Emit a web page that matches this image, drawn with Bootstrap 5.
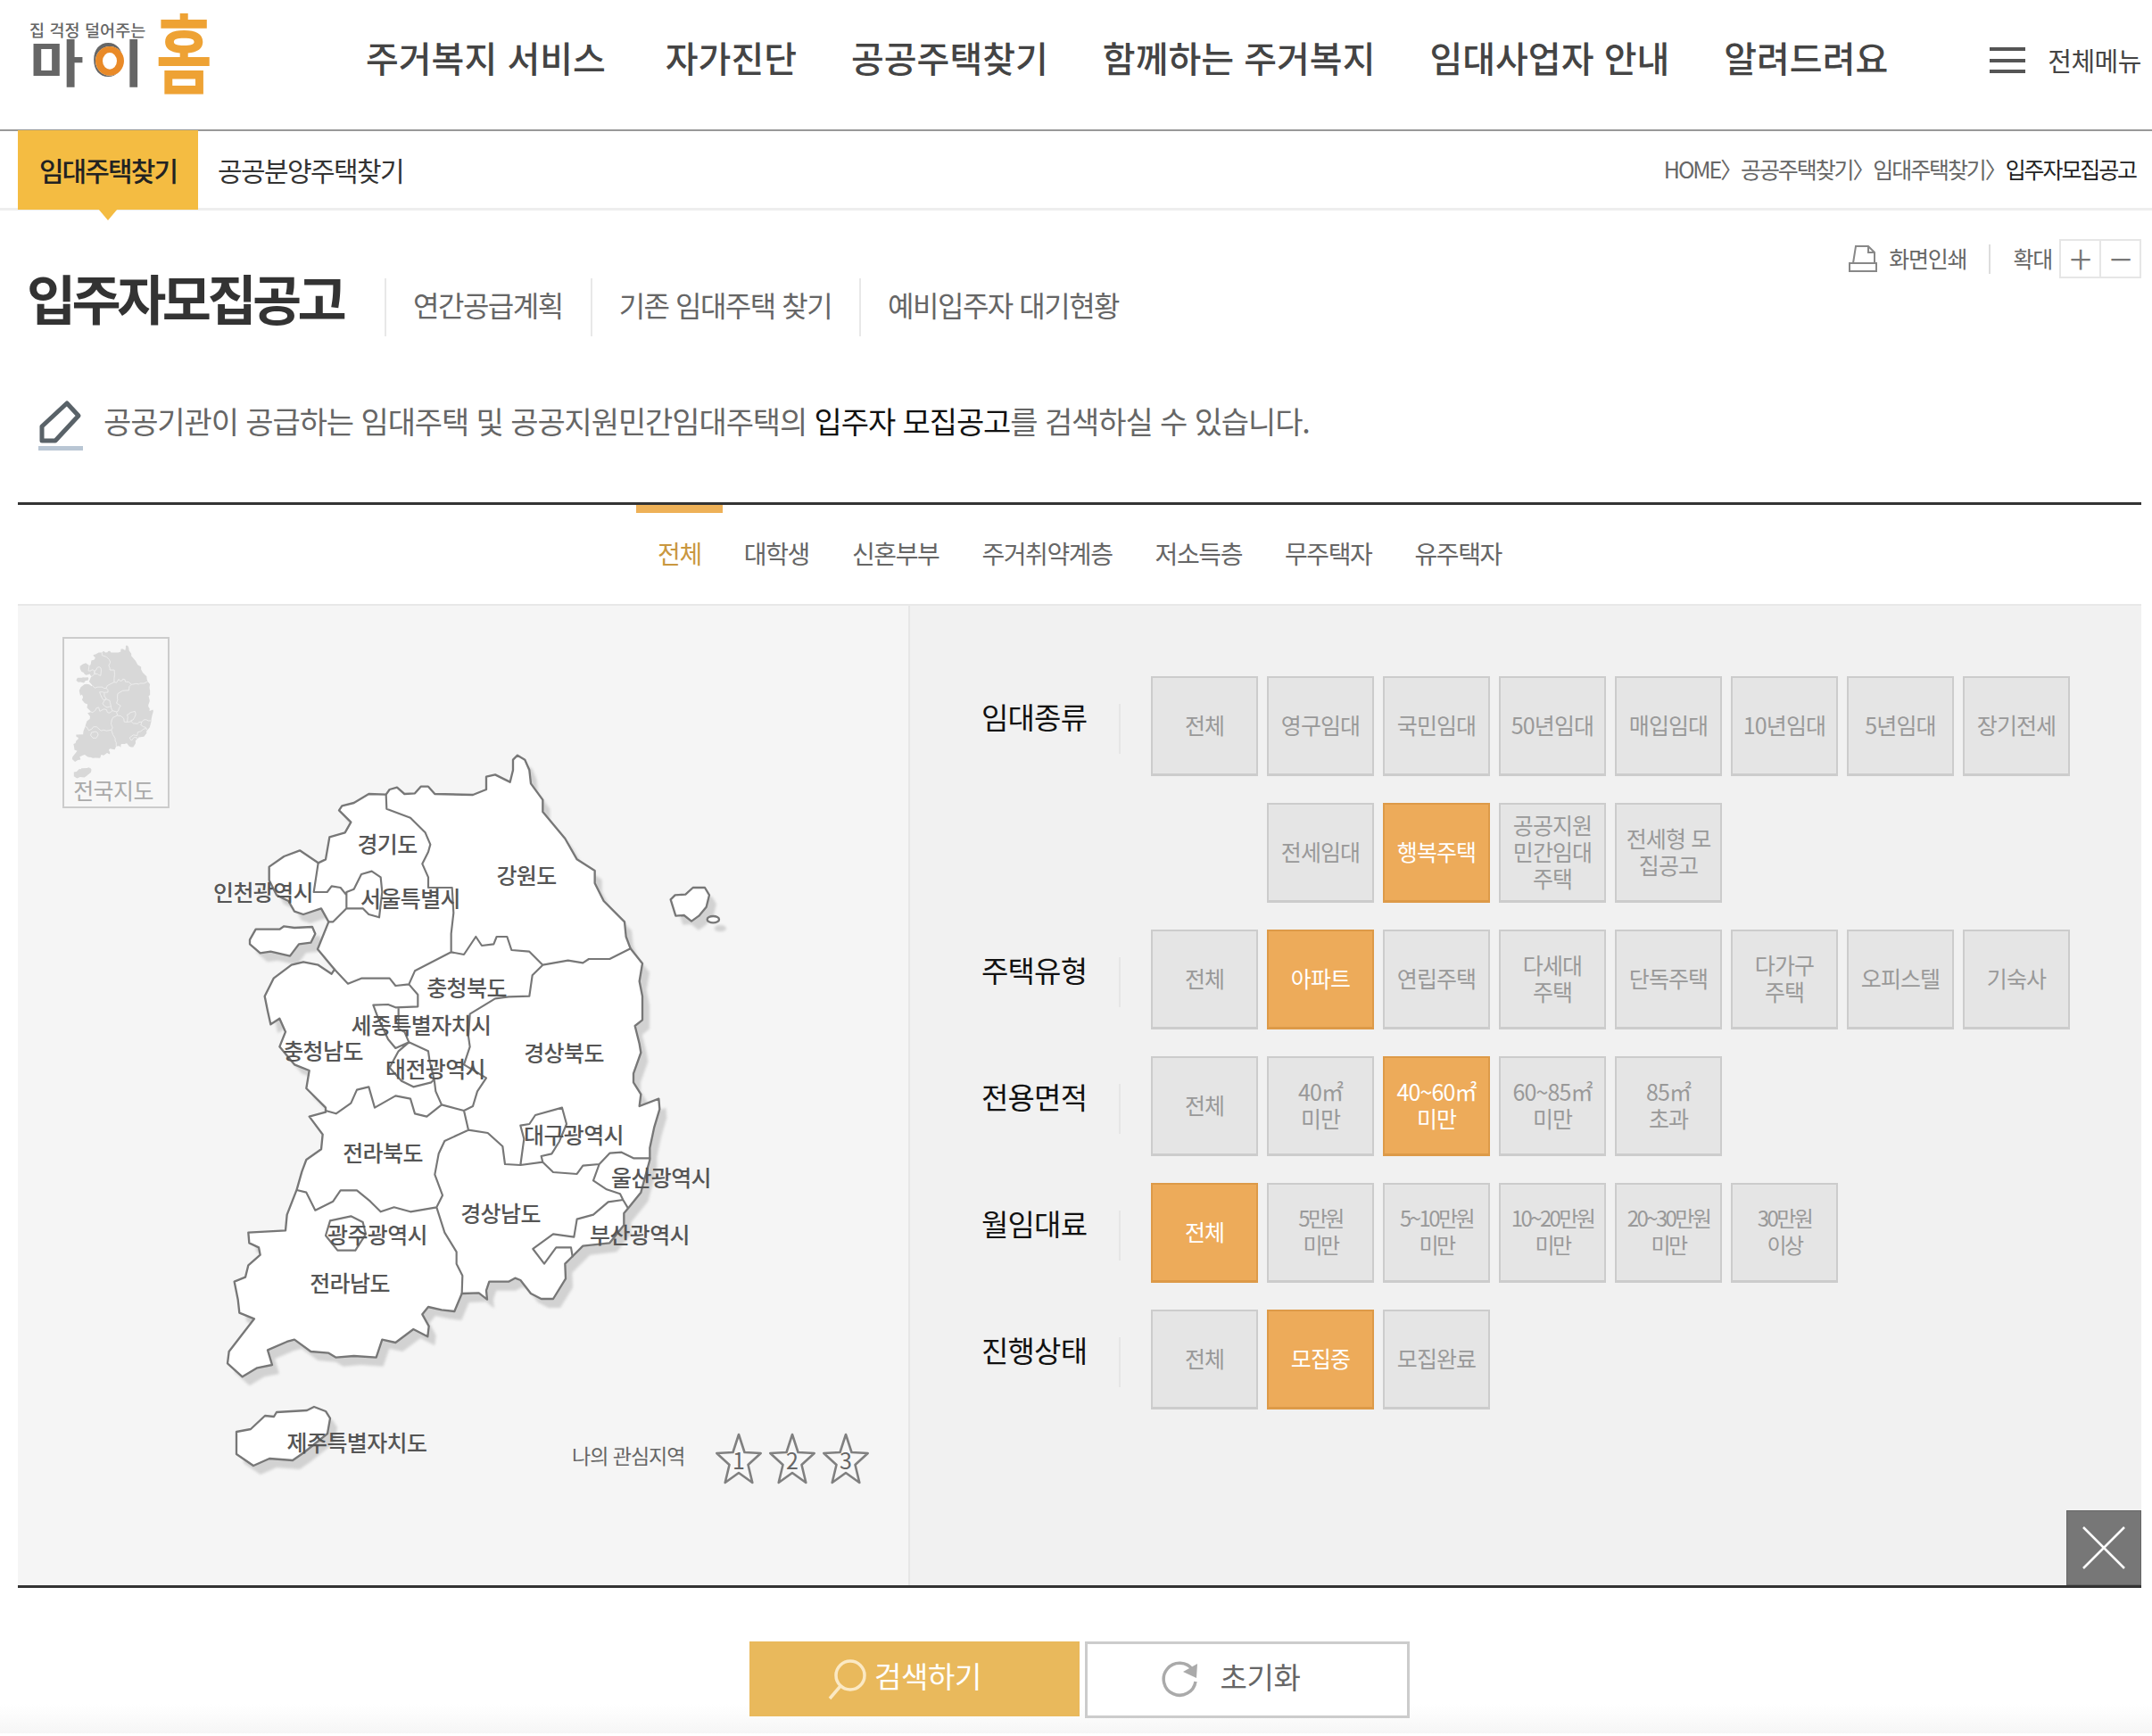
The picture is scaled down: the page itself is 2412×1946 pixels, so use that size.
<!DOCTYPE html>
<html lang="ko">
<head>
<meta charset="utf-8">
<title>입주자모집공고</title>
<link href="https://cdn.jsdelivr.net/npm/bootstrap@5.3.0/dist/css/bootstrap.min.css" rel="stylesheet">
<style>
html,body{background:#fff}
body{font-family:"Noto Sans CJK KR","Noto Sans",sans-serif;color:#333;width:2412px;height:1946px;overflow:hidden}
a{text-decoration:none;color:inherit}
.top-head{height:147px;border-bottom:2px solid #999;padding-left:33px}
.logo-box{width:206px;height:100px;align-self:flex-start;margin-top:14px;position:relative}
.logo-left{width:142px;padding-top:9px}
.logo-sub{font-size:18.5px;letter-spacing:.1px;line-height:20px;color:#666;font-weight:500;white-space:nowrap}
.logo-main{font-size:66px;line-height:50px;height:50px;font-weight:700;color:#666;letter-spacing:7px;position:relative;white-space:nowrap;margin-top:3px;transform:scaleY(.86);transform-origin:top left}
.logo-ring{position:absolute;left:71px;top:4px;width:38px;height:44px}
.logo-home{font-size:68px;line-height:88px;height:88px;font-weight:700;color:#eea234;transform:scaleY(1.42);transform-origin:center;margin-top:-2px}
.gnb{margin-left:171px;gap:61px;margin-bottom:18px}
.gnb a{font-size:40px;line-height:50px;font-weight:500;color:#444;white-space:nowrap}
.gnb a:nth-child(2){margin-left:6px}
.all-menu{margin-left:114px;gap:25px;font-size:29px;color:#444;letter-spacing:-.5px;white-space:nowrap;margin-bottom:10px}
.burger{width:40px;height:29px;border-top:4px solid #555;border-bottom:4px solid #555;position:relative}
.burger::after{content:"";position:absolute;left:0;right:0;top:8.5px;height:4px;background:#555}
.sub-head{height:89px;border-bottom:3px solid #eee;padding-left:20px;padding-right:18px}
.sub-on{width:202px;height:89px;background:#f4bc42;font-size:30px;font-weight:500;letter-spacing:-1.9px;color:#222;position:relative}
.sub-on::after{content:"";position:absolute;left:90px;top:88px;border-left:11px solid transparent;border-right:11px solid transparent;border-top:13px solid #f4bc42}
.sub-off{font-size:30px;letter-spacing:-1.6px;margin-left:22px;color:#333}
.crumb{font-size:25px;letter-spacing:-2.1px;color:#666}
.crumb b{font-weight:400;color:#222}
.wrap-main{margin:0 12px 0 20px}
.title-row{padding-top:32px;height:141px}
.title-main{font-size:60px;line-height:65px;font-weight:700;letter-spacing:-4.6px;color:#333;margin:0 0 0 10px;width:401px;padding-top:32px;height:109px;box-sizing:border-box;white-space:nowrap}
.side-links{padding-top:44px}
.side-links a{display:flex;align-items:center;height:65px;padding:0 31px 7px 30px;border-left:2px solid #e8e8e8;font-size:32px;letter-spacing:-1.5px;color:#666;white-space:nowrap}
.tools{font-size:25px;letter-spacing:-1.2px;color:#666;height:44px}
.tool-ico{margin-right:12px}
.tool-sep{width:2px;height:33px;background:#ddd;margin:0 25px}
.zoom-box{width:92px;height:44px;border:2px solid #e6e6e6;margin-left:8px}
.zoom-box span{flex:1;text-align:center;font-size:46px;line-height:36px;color:#777;font-weight:300}
.zoom-box span+span{border-left:2px solid #e6e6e6}
.desc-row{padding:70px 0 56px 23px;height:186px;gap:23px}
.desc-text{font-size:34px;line-height:50px;letter-spacing:-1.1px;color:#666;white-space:nowrap}
.desc-text b{font-weight:400;color:#111}
.tab-row{height:116px;border-top:3px solid #333;border-bottom:2px solid #e8e8e8}
.tab-item{padding:0 24px;font-size:28px;letter-spacing:-1.4px;color:#666;line-height:109px;position:relative;white-space:nowrap}
.tab-on{color:#c9973f}
.tab-on::before{content:"";position:absolute;left:0;right:0;top:0;height:9px;background:#eeb158}
.panel-row{height:1101px;border-bottom:3px solid #333}
.panel-map{flex:0 0 998px;background:#f5f5f5}
.panel-map svg{display:block}
.panel-filter{flex:1;background:#f1f1f1;border-left:2px solid #e6e6e6;padding:79px 0 0 80px;position:relative;gap:30px}
.frow{display:flex}
.flabel{flex:0 0 156px;height:56px;margin:31px 34px 0 0;border-right:2px solid #e6e6e6;font-size:33px;line-height:28px;letter-spacing:-.8px;color:#111;white-space:nowrap}
.fgrid{display:grid;grid-template-columns:repeat(8,120px);grid-auto-rows:112px;gap:30px 10px}
.fbtn{display:flex;align-items:center;justify-content:center;padding:0 0 3px;background:#e5e5e5;border:2px solid #ccc;border-bottom-width:3px;border-radius:0;color:#999;font-size:25px;line-height:30px;letter-spacing:-.9px;white-space:nowrap}
.fbtn-on,.fbtn-on:hover{background:#edab5a;border-color:#dd9a48;color:#fff}
.fbtn-sm{letter-spacing:-2.6px;font-size:24px}
.close-x{position:absolute;right:0;bottom:0;width:84px;height:84px;background:#777;border:1px solid #666;padding:0;border-radius:0}
.foot-zone{height:163px;padding:60px 0 0 840px;gap:6px;background:linear-gradient(#fff 80%,#f6f6f6)}
.act-go,.act-go:hover{width:370px;height:84px;background:#e9b95c;border:0;border-radius:0;color:#fff;font-size:33px;letter-spacing:-.4px;gap:8px;padding:0 24px 0 0}
.act-re,.act-re:hover{width:364px;height:86px;background:#fff;border:3px solid #ccc;border-radius:0;color:#666;font-size:33px;letter-spacing:-.4px;gap:24px;padding:0 37px 0 0}
.act-label{padding-bottom:7px}
.m-land{fill:#fff;stroke:#777;stroke-width:7;stroke-linejoin:round}
.m-shadow{fill:#d2d2d2;stroke:none;filter:url(#sblur)}
.m-line{fill:none;stroke:#777;stroke-width:6.5;stroke-linejoin:round;stroke-linecap:round}
.m-mini{fill:#d8d8d8;stroke:none}
.m-miniline{fill:none;stroke:#efefef;stroke-width:14}
.m-txt{font-size:25px;letter-spacing:-.6px;font-weight:500;fill:#555;text-anchor:middle;dominant-baseline:central}
.m-plain{font-size:23px;letter-spacing:-1px;fill:#666;dominant-baseline:central}
.m-num{font-size:25px;fill:#666;text-anchor:middle;dominant-baseline:central}
.m-mtitle{font-size:25px;letter-spacing:-.6px;fill:#aaa;text-anchor:middle;dominant-baseline:central}
</style>
</head>
<body>
<header class="top-head d-flex align-items-center">
  <a href="#" class="logo-box d-flex">
    <div class="logo-left">
      <div class="logo-sub">집 걱정 덜어주는</div>
      <div class="logo-main">마이<svg class="logo-ring" viewBox="0 0 38 44"><ellipse cx="19" cy="22" rx="16" ry="19" fill="#fff"/><ellipse cx="19" cy="22" rx="12" ry="15" fill="#fff" stroke="#e98a28" stroke-width="8"/></svg></div>
    </div>
    <div class="logo-home">홈</div>
  </a>
  <nav class="gnb d-flex">
    <a href="#">주거복지 서비스</a>
    <a href="#">자가진단</a>
    <a href="#">공공주택찾기</a>
    <a href="#">함께하는 주거복지</a>
    <a href="#">임대사업자 안내</a>
    <a href="#">알려드려요</a>
  </nav>
  <a href="#" class="all-menu d-flex align-items-center"><span class="burger"></span><span>전체메뉴</span></a>
</header>
<div class="sub-head d-flex align-items-center">
  <a href="#" class="sub-on d-flex align-items-center justify-content-center">임대주택찾기</a>
  <a href="#" class="sub-off">공공분양주택찾기</a>
  <div class="crumb ms-auto">HOME〉공공주택찾기〉임대주택찾기〉<b>입주자모집공고</b></div>
</div>
<main class="wrap-main">
  <div class="title-row d-flex">
    <h1 class="title-main">입주자모집공고</h1>
    <div class="side-links d-flex">
      <a href="#">연간공급계획</a>
      <a href="#">기존 임대주택 찾기</a>
      <a href="#">예비입주자 대기현황</a>
    </div>
    <div class="tools d-flex align-items-center ms-auto">
      <svg width="34" height="32" viewBox="0 0 34 32" class="tool-ico"><path d="M6 21 L9 2 H23 L30 9 V21 M23 2 V9 H30" fill="none" stroke="#888" stroke-width="2"/><rect x="2" y="21" width="30" height="9" fill="#fff" stroke="#888" stroke-width="2"/></svg>
      <span>화면인쇄</span><span class="tool-sep"></span><span>확대</span>
      <div class="zoom-box d-flex"><span>+</span><span>−</span></div>
    </div>
  </div>
  <div class="desc-row d-flex align-items-start">
    <svg width="50" height="60" viewBox="0 0 50 60"><path d="M4 47 L4 31 L32 5 L45 19 L19 47 Z" fill="none" stroke="#596268" stroke-width="5" stroke-linejoin="round"/><rect x="0" y="53" width="50" height="5" fill="#b9c6d4"/></svg>
    <p class="desc-text m-0">공공기관이 공급하는 임대주택 및 공공지원민간임대주택의 <b>입주자 모집공고</b>를 검색하실 수 있습니다.</p>
  </div>
  <div class="tab-row d-flex justify-content-center">
    <a href="#" class="tab-item tab-on">전체</a>
    <a href="#" class="tab-item">대학생</a>
    <a href="#" class="tab-item">신혼부부</a>
    <a href="#" class="tab-item">주거취약계층</a>
    <a href="#" class="tab-item">저소득층</a>
    <a href="#" class="tab-item">무주택자</a>
    <a href="#" class="tab-item">유주택자</a>
  </div>
  <div class="panel-row d-flex">
    <div class="panel-map">
      <svg width="998" height="1098" viewBox="20 679 998 1098" role="img" aria-label="지역 지도">
        <defs>
          <filter id="sblur" x="-10%" y="-10%" width="120%" height="120%"><feGaussianBlur stdDeviation="4"/></filter>
          <g id="landmain">
            <path d="M548 152 L560 135 585 128 610 150 645 148 665 125 690 125 712 150 840 153 885 135 885 92 915 85 945 100 965 110 975 70 975 35 990 20 1015 35 1030 70 1035 115 1075 170 1075 210 1150 300 1190 370 1250 408 1250 450 1280 510 1350 580 1355 630 1370 670 1410 720 1400 780 1410 830 1410 910 1385 930 1400 990 1405 1020 1380 1090 1380 1120 1405 1160 1400 1200 1465 1175 1468 1210 1450 1270 1435 1340 1435 1380 1405 1490 1365 1540 1348 1560 1348 1600 1300 1660 1210 1670 1170 1710 1150 1730 1152 1780 1110 1848 1070 1848 1035 1830 1000 1785 982 1778 960 1790 895 1790 885 1820 888 1850 860 1828 803 1830 778 1890 735 1885 690 1875 670 1900 692 1940 688 1975 640 1950 580 1995 535 1985 515 2045 440 2040 380 2045 355 2030 295 2025 240 1985 215 1992 150 2020 165 2070 115 2080 65 2110 15 2065 20 2025 105 1915 55 1895 50 1850 38 1790 75 1775 85 1735 125 1700 120 1675 88 1660 85 1625 210 1618 215 1565 248 1480 265 1420 280 1380 330 1345 335 1295 290 1235 345 1220 345 1205 280 1140 290 1080 240 1060 190 1000 210 950 190 905 160 925 150 880 140 830 170 770 230 725 270 715 320 725 365 755 375 740 318 672 355 580 330 535 270 555 240 545 220 510 180 490 155 440 155 395 205 360 258 340 320 382 345 370 358 295 410 280 430 245 390 205 400 190 440 180 490 150 Z"/>
            <path d="M90 640 L110 605 190 605 205 595 240 600 300 597 310 620 295 650 255 655 225 695 160 680 125 685 90 655 Z"/>
            <path d="M45 2295 L93 2286 141 2241 171 2244 180 2229 282 2223 306 2211 345 2226 360 2250 351 2301 273 2364 234 2391 156 2385 102 2409 45 2370 Z"/>
          </g>
          <g id="landeast">
            <path d="M1505 505 L1520 490 1555 488 1580 465 1620 465 1635 490 1625 530 1600 560 1575 578 1550 558 1522 560 Z"/>
            <ellipse cx="1648" cy="572" rx="20" ry="11"/>
          </g>
          <path id="borderlines" d="M548 152 L550 200 630 230 680 280 697 320 690 345 670 385 690 430 690 465 770 465 775 550 767 620 767 682 810 690 850 630 870 660 910 655 920 630 955 630 970 675 1030 680 1075 725 1160 710 1210 718 1230 705 1300 705 1370 670 M1075 725 L1040 760 1030 830 960 832 915 838 830 890 825 965 830 1000 810 1060 885 1105 855 1150 840 1200 810 1215 735 1195 715 1150 710 1110 M345 1215 L380 1225 430 1190 450 1145 490 1135 510 1205 580 1165 630 1175 645 1225 685 1235 735 1195 M810 1215 L825 1280 745 1317 725 1360 712 1430 738 1500 718 1540 M248 1482 L280 1490 310 1550 370 1520 395 1483 450 1483 495 1520 530 1555 575 1540 630 1555 718 1540 745 1625 785 1690 785 1730 805 1770 803 1830 M825 1280 L890 1290 940 1335 948 1395 1000 1398 1075 1388 1110 1422 1190 1428 1210 1400 1265 1395 1300 1358 1340 1355 1380 1375 1435 1375 M1265 1395 L1245 1450 1290 1480 1335 1495 1345 1515 1360 1540 M1345 1515 L1295 1522 1245 1565 1190 1580 1180 1640 1110 1630 1042 1680 1080 1730 1120 1675 1170 1675 1175 1705 M1000 1398 L1012 1310 1000 1265 1030 1260 1050 1230 1140 1205 1155 1260 1130 1320 1105 1360 1070 1368 1075 1388 M375 740 L420 788 465 770 560 770 580 795 625 790 645 745 767 682 M625 790 L655 825 655 865 580 868 555 858 505 860 520 900 555 975 580 1005 625 985 610 950 590 940 590 868 M625 985 L690 1015 695 1050 710 1110 700 1120 640 1135 600 1115 560 1070 590 1015 625 985 M320 382 L305 480 350 480 365 460 395 465 415 490 415 535 370 580 355 580 M415 535 L415 480 440 470 465 420 500 410 530 430 535 480 525 565 490 555 470 535 415 535 M360 1585 L430 1570 470 1590 480 1630 445 1685 385 1685 345 1635 360 1585"/>
        </defs>
        <!-- 전국지도 -->
        <rect x="71" y="715" width="118" height="190" fill="#f7f7f7" stroke="#ccc" stroke-width="2"/>
        <g transform="translate(80 722) scale(.0625)"><use href="#landmain" class="m-mini"/><use href="#borderlines" class="m-miniline"/></g>
        <text x="127" y="885" class="m-mtitle">전국지도</text>
        <!-- 지도 -->
        <g transform="translate(250 840) scale(.33333)">
          <g transform="translate(24 30)"><use href="#landmain" class="m-shadow"/><use href="#landeast" class="m-shadow"/></g>
          <use href="#landmain" class="m-land"/>
          <use href="#landeast" class="m-land"/>
          <use href="#borderlines" class="m-line"/>
        </g>
        <g>
          <text x="434" y="945" class="m-txt">경기도</text>
          <text x="590" y="980" class="m-txt">강원도</text>
          <text x="295" y="999" class="m-txt">인천광역시</text>
          <text x="460" y="1006" class="m-txt">서울특별시</text>
          <text x="523" y="1106" class="m-txt">충청북도</text>
          <text x="472" y="1148" class="m-txt">세종특별자치시</text>
          <text x="362" y="1177" class="m-txt">충청남도</text>
          <text x="488" y="1197" class="m-txt">대전광역시</text>
          <text x="632" y="1179" class="m-txt">경상북도</text>
          <text x="643" y="1271" class="m-txt">대구광역시</text>
          <text x="429" y="1291" class="m-txt">전라북도</text>
          <text x="741" y="1319" class="m-txt">울산광역시</text>
          <text x="561" y="1359" class="m-txt">경상남도</text>
          <text x="423" y="1383" class="m-txt">광주광역시</text>
          <text x="717" y="1383" class="m-txt">부산광역시</text>
          <text x="392" y="1437" class="m-txt">전라남도</text>
          <text x="400" y="1616" class="m-txt">제주특별자치도</text>
        </g>
        <text x="641" y="1631" class="m-plain">나의 관심지역</text>
        <defs><polygon id="starshape" points="0,-30 6.5,-10 24.7,-9 10.5,4 15.3,24 0,13 -15.3,24 -10.5,4 -24.7,-9 -6.5,-10" fill="#f7f7f7" stroke="#808080" stroke-width="2.6" stroke-linejoin="round"/></defs>
        <use href="#starshape" x="828" y="1638"/><text x="828" y="1636" class="m-num">1</text>
        <use href="#starshape" x="888" y="1638"/><text x="888" y="1636" class="m-num">2</text>
        <use href="#starshape" x="948" y="1638"/><text x="948" y="1636" class="m-num">3</text>
      </svg>
    </div>
    <div class="panel-filter d-flex flex-column">
      <div class="frow">
        <div class="flabel">임대종류</div>
        <div class="fgrid">
          <button class="btn fbtn">전체</button><button class="btn fbtn">영구임대</button><button class="btn fbtn">국민임대</button><button class="btn fbtn">50년임대</button><button class="btn fbtn">매입임대</button><button class="btn fbtn">10년임대</button><button class="btn fbtn">5년임대</button><button class="btn fbtn">장기전세</button>
          <span></span><button class="btn fbtn">전세임대</button><button class="btn fbtn fbtn-on">행복주택</button><button class="btn fbtn">공공지원<br>민간임대<br>주택</button><button class="btn fbtn">전세형 모<br>집공고</button>
        </div>
      </div>
      <div class="frow">
        <div class="flabel">주택유형</div>
        <div class="fgrid">
          <button class="btn fbtn">전체</button><button class="btn fbtn fbtn-on">아파트</button><button class="btn fbtn">연립주택</button><button class="btn fbtn">다세대<br>주택</button><button class="btn fbtn">단독주택</button><button class="btn fbtn">다가구<br>주택</button><button class="btn fbtn">오피스텔</button><button class="btn fbtn">기숙사</button>
        </div>
      </div>
      <div class="frow">
        <div class="flabel">전용면적</div>
        <div class="fgrid">
          <button class="btn fbtn">전체</button><button class="btn fbtn">40㎡<br>미만</button><button class="btn fbtn fbtn-on">40~60㎡<br>미만</button><button class="btn fbtn">60~85㎡<br>미만</button><button class="btn fbtn">85㎡<br>초과</button>
        </div>
      </div>
      <div class="frow">
        <div class="flabel">월임대료</div>
        <div class="fgrid">
          <button class="btn fbtn fbtn-on">전체</button><button class="btn fbtn fbtn-sm">5만원<br>미만</button><button class="btn fbtn fbtn-sm">5~10만원<br>미만</button><button class="btn fbtn fbtn-sm">10~20만원<br>미만</button><button class="btn fbtn fbtn-sm">20~30만원<br>미만</button><button class="btn fbtn fbtn-sm">30만원<br>이상</button>
        </div>
      </div>
      <div class="frow">
        <div class="flabel">진행상태</div>
        <div class="fgrid">
          <button class="btn fbtn">전체</button><button class="btn fbtn fbtn-on">모집중</button><button class="btn fbtn">모집완료</button>
        </div>
      </div>
      <button class="btn close-x" aria-label="닫기"><svg width="84" height="84" viewBox="0 0 84 84" class="d-block"><path d="M18 18 L64 64 M64 18 L18 64" stroke="#fff" stroke-width="2.5"/></svg></button>
    </div>
  </div>
</main>
<div class="foot-zone d-flex align-items-start">
  <button class="btn act-go d-flex align-items-center justify-content-center"><svg width="46" height="48" viewBox="0 0 46 48"><circle cx="27" cy="20" r="16" fill="none" stroke="#fbe9c4" stroke-width="3.5"/><path d="M16 32 L4 46" stroke="#fbe9c4" stroke-width="3.5"/></svg><span class="act-label">검색하기</span></button>
  <button class="btn act-re d-flex align-items-center justify-content-center"><svg width="42" height="42" viewBox="0 0 42 42"><path d="M35 10 A18 18 0 1 0 38 23" fill="none" stroke="#aaa" stroke-width="3.5"/><path d="M24 12 L40 3 L39 19 Z" fill="#aaa"/></svg><span class="act-label">초기화</span></button>
</div>
<script src="https://cdn.jsdelivr.net/npm/bootstrap@5.3.0/dist/js/bootstrap.bundle.min.js"></script>
</body>
</html>
